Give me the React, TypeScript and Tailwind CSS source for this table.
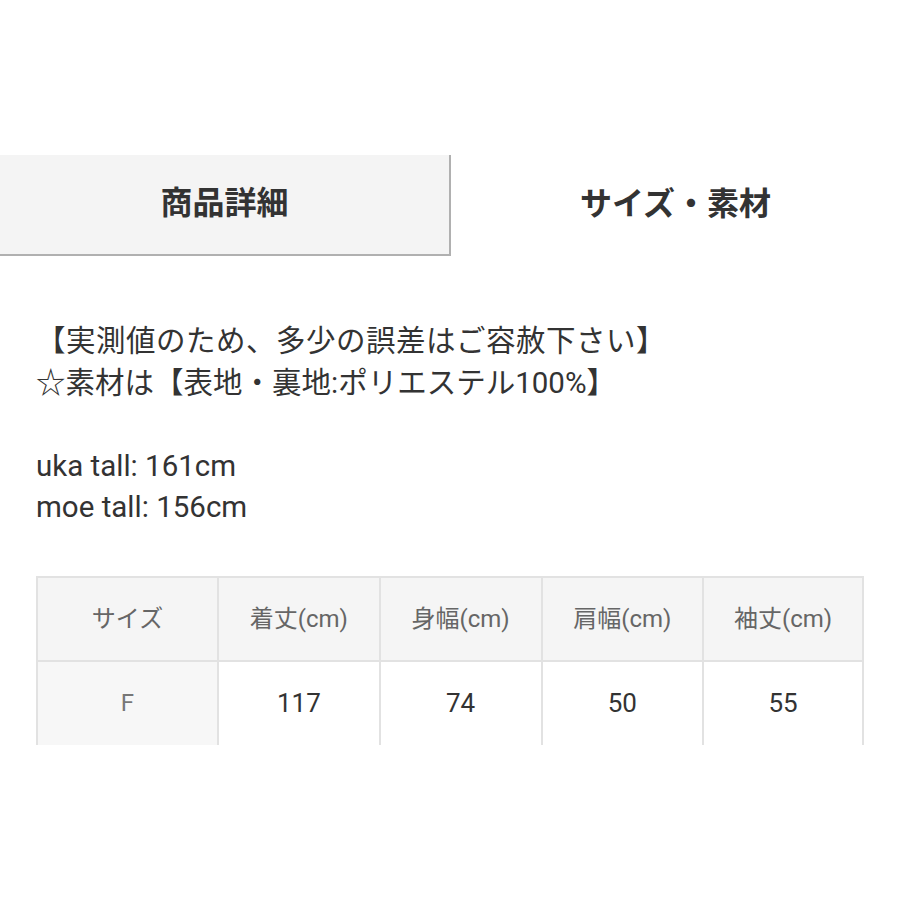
const HEADERS = ["サイズ", "着丈(cm)", "身幅(cm)", "肩幅(cm)", "袖丈(cm)"];
const ROW = ["F", "117", "74", "50", "55"];

export default function App() {
  return (
    <div
      className="w-[900px] h-[900px] bg-white text-[#333]"
      style={{ fontFamily: 'Roboto, "Noto Sans CJK JP", sans-serif' }}
    >
      <div className="h-[155px]" />
      {/* Tabs */}
      <div className="flex h-[101px]">
        <div className="w-[451px] flex items-center justify-center bg-[#f4f4f4] border-r-2 border-b-2 border-[#b0b0b0] text-[32px] font-bold pb-[3px]">
          商品詳細
        </div>
        <div className="flex-1 flex items-center justify-center text-[32px] font-bold pb-[3px]">
          サイズ・素材
        </div>
      </div>

      {/* Notes */}
      <div className="mt-[65px] px-[36px] text-[29.5px] leading-[41.5px]">
        <p className="tracking-[0.5px]">【実測値のため、多少の誤差はご容赦下さい】</p>
        <p>☆素材は【表地・裏地:ポリエステル100%】</p>
        <p>&nbsp;</p>
        <p>uka tall: 161cm</p>
        <p>moe tall: 156cm</p>
      </div>

      {/* Size table */}
      <div className="mt-[47px] mx-[36px] grid grid-cols-[181px_1fr_1fr_1fr_1fr]">
        {HEADERS.map((h, i) => (
          <div
            key={h}
            className={
              "h-[84px] flex items-center justify-center bg-[#f5f5f5] border-t-2 border-l-2 border-[#e2e2e2] text-[24px] text-[#666] " +
              (i === HEADERS.length - 1 ? "border-r-2" : "")
            }
          >
            {h}
          </div>
        ))}
        {ROW.map((v, i) => (
          <div
            key={i}
            className={
              "h-[85px] flex items-center justify-center border-t-2 border-l-2 border-[#e2e2e2] " +
              (i === 0 ? "bg-[#f7f7f7] text-[24px] text-[#777] " : "bg-white text-[26px] text-[#333] ") +
              (i === ROW.length - 1 ? "border-r-2" : "")
            }
          >
            {v}
          </div>
        ))}
      </div>
    </div>
  );
}
